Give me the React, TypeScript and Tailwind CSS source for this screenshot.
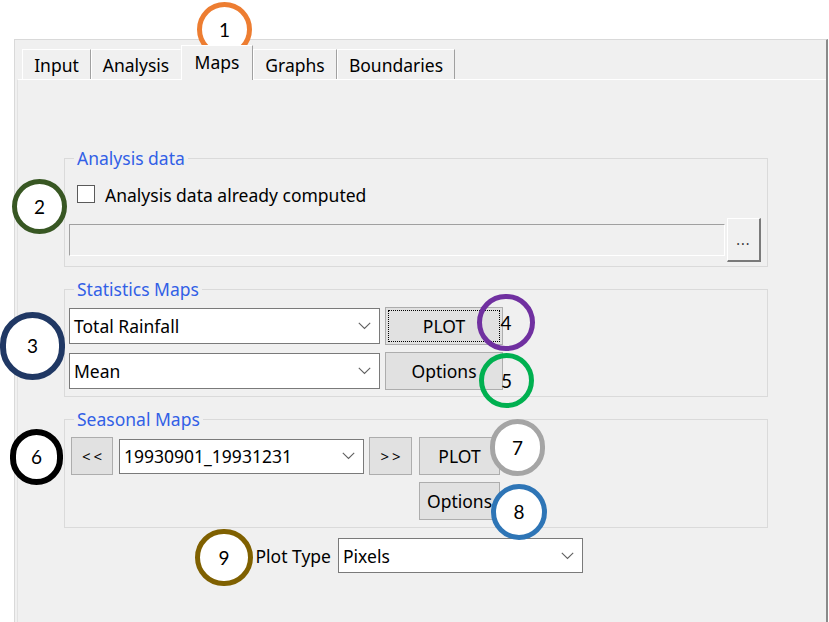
import type { ReactNode } from 'react';

function Chevron() {
  return (
    <svg width="13" height="8" viewBox="0 0 13 8" fill="none">
      <path d="M0.8 0.8 L6.5 6.5 L12.2 0.8" stroke="#606060" strokeWidth="1.1" />
    </svg>
  );
}

function Select({ className, children }: { className: string; children: ReactNode }) {
  return (
    <div className={`flex items-center justify-between border border-[#7a7a7a] bg-white pl-[4px] pr-[8px] ${className}`}>
      <span>{children}</span>
      <Chevron />
    </div>
  );
}

function Btn({ className, children, focus }: { className: string; children: ReactNode; focus?: boolean }) {
  return (
    <div
      className={`flex items-center justify-center border border-[#adadad] bg-[#e1e1e1] ${
        focus ? 'outline outline-1 outline-dotted outline-black outline-offset-[-4px]' : ''
      } ${className}`}
    >
      {children}
    </div>
  );
}

function Tab({ className, children, active }: { className: string; children: ReactNode; active?: boolean }) {
  if (active) {
    return (
      <div
        className={`relative z-10 -mb-px flex h-[35px] justify-center border-l border-t border-r border-white border-r-[#a0a0a0] bg-[#f0f0f0] pt-[6px] ${className}`}
      >
        {children}
      </div>
    );
  }
  return (
    <div className={`flex h-[30px] justify-center border-l border-t border-r border-white border-r-[#a0a0a0] pt-[5px] ${className}`}>
      {children}
    </div>
  );
}

function Group({ title, className, children }: { title: string; className?: string; children: ReactNode }) {
  return (
    <fieldset className={`w-[704px] border border-[#dadada] ${className ?? ''}`}>
      <legend className="ml-[9px] px-[3px] text-[#3260e6]">{title}</legend>
      {children}
    </fieldset>
  );
}

export default function App() {
  return (
    <div className="relative h-[622px] w-[829px] overflow-hidden bg-white pl-[14px] pt-[39px] font-['Noto_Sans',sans-serif] text-[17.5px] leading-[20px] text-black">
      {/* window frame */}
      <div className="flex h-[583px] w-[814px] flex-col border-l border-t border-r-2 border-[#d9d9d9] border-r-[#8a8a8a] bg-[#f0f0f0]">
        {/* tabs */}
        <div className="flex h-[39px] items-end pl-[7px]">
          <Tab className="w-[69px]">Input</Tab>
          <Tab className="w-[90px] border-r-transparent">Analysis</Tab>
          <Tab className="w-[72px]" active>
            Maps
          </Tab>
          <Tab className="w-[84px]">Graphs</Tab>
          <Tab className="w-[118px]">Boundaries</Tab>
        </div>

        {/* tab page */}
        <div className="ml-[2px] flex-1 border-l border-t border-l-[#e2e2e2] border-t-white pl-[46px] pt-[68px]">
          <Group title="Analysis data">
            <div className="mt-[16px] flex h-[20px] items-center gap-[10px] pl-[12px]">
              <span className="h-[18px] w-[18px] border border-[#5a5a5a] bg-white" />
              <span className="pt-[2px]">Analysis data already computed</span>
            </div>
            <div className="mt-[14px] flex items-center gap-[2px] pb-[4px] pl-[4px]">
              <div className="h-[32px] w-[656px] border border-[#a0a0a0] border-b-white border-r-white bg-[#f0f0f0]" />
              <div className="flex h-[44px] w-[34px] items-center justify-center border-l border-t border-r-2 border-b-2 border-white border-r-[#7a7a7a] border-b-[#7a7a7a] text-[14px] leading-[16px] tracking-[1px] text-[#333]">
                ...
              </div>
            </div>
          </Group>

          <Group title="Statistics Maps" className="mt-[12px]">
            <div className="flex flex-col gap-[7px] pb-[6px] pl-[4px] pt-[8px]">
              <div className="flex h-[38px] items-center gap-[5px]">
                <Select className="h-[36px] w-[311px]">Total Rainfall</Select>
                <Btn className="h-[38px] w-[118px]" focus>
                  PLOT
                </Btn>
              </div>
              <div className="flex h-[38px] items-center gap-[5px]">
                <Select className="h-[36px] w-[311px]">Mean</Select>
                <Btn className="h-[38px] w-[118px]">Options</Btn>
              </div>
            </div>
          </Group>

          <Group title="Seasonal Maps" className="mt-[12px]">
            <div className="flex flex-col gap-[7px] pb-[7px] pl-[6px] pt-[8px]">
              <div className="flex h-[38px] items-center">
                <Btn className="h-[38px] w-[42px] pl-[3px] text-[15px] tracking-[3px]">&lt;&lt;</Btn>
                <Select className="ml-[6px] h-[35px] w-[245px]">19930901_19931231</Select>
                <Btn className="ml-[5px] h-[38px] w-[43px] pl-[3px] text-[15px] tracking-[3px]">&gt;&gt;</Btn>
                <Btn className="ml-[7px] h-[38px] w-[81px]">PLOT</Btn>
              </div>
              <div className="flex pl-[348px]">
                <Btn className="h-[38px] w-[81px]">Options</Btn>
              </div>
            </div>
          </Group>

          <div className="mt-[10px] flex items-center gap-[7px]">
            <span className="w-[267px] text-right">Plot Type</span>
            <Select className="h-[35px] w-[245px]">Pixels</Select>
          </div>
        </div>
      </div>

      {/* numbered callouts */}
      <div className="absolute left-[197px] top-[2px] flex h-[55px] w-[55px] items-center justify-center rounded-full border-[5px] border-[#ED7D31] bg-white font-['Lato',sans-serif] text-[19px]">
        1
      </div>
      <div className="absolute left-[12px] top-[179px] flex h-[55px] w-[55px] items-center justify-center rounded-full border-[5px] border-[#385723] bg-white font-['Lato',sans-serif] text-[19px]">
        2
      </div>
      <div className="absolute left-[0px] top-[312px] flex h-[68px] w-[65px] items-center justify-center rounded-full border-[6px] border-[#203864] bg-white font-['Lato',sans-serif] text-[19px]">
        3
      </div>
      <div className="absolute left-[477px] top-[294px] flex h-[57px] w-[58px] items-center justify-center rounded-full border-[5px] border-[#7030A0] font-['Lato',sans-serif] text-[19px]">
        4
      </div>
      <div className="absolute left-[479px] top-[353px] flex h-[55px] w-[55px] items-center justify-center rounded-full border-[5px] border-[#00B050] font-['Lato',sans-serif] text-[19px]">
        5
      </div>
      <div className="absolute left-[10px] top-[429px] flex h-[56px] w-[53px] items-center justify-center rounded-full border-[6px] border-black bg-white font-['Lato',sans-serif] text-[19px]">
        6
      </div>
      <div className="absolute left-[490px] top-[419px] flex h-[57px] w-[55px] items-center justify-center rounded-full border-[5px] border-[#A5A5A5] bg-white font-['Lato',sans-serif] text-[19px]">
        7
      </div>
      <div className="absolute left-[491px] top-[484px] flex h-[56px] w-[56px] items-center justify-center rounded-full border-[5px] border-[#2E75B6] bg-white font-['Lato',sans-serif] text-[19px]">
        8
      </div>
      <div className="absolute left-[195px] top-[529px] flex h-[57px] w-[58px] items-center justify-center rounded-full border-[5px] border-[#7F6000] bg-white font-['Lato',sans-serif] text-[19px]">
        9
      </div>
    </div>
  );
}
